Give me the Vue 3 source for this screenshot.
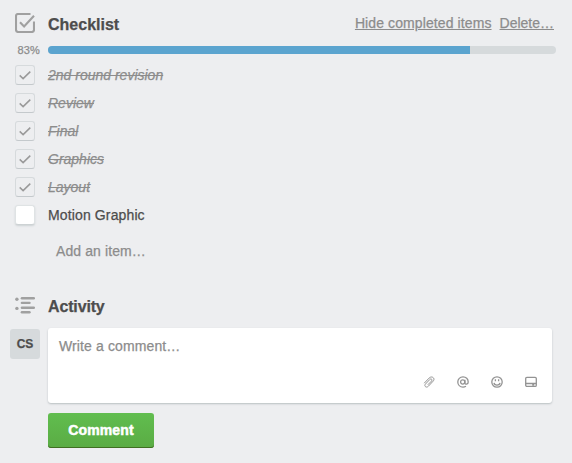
<template>
  <div class="card-detail">
    <section class="checklist">
      <header class="section-header">
        <svg class="section-icon" width="20" height="20" viewBox="0 0 20 20">
          <path d="M15.5 1H3.2Q1 1 1 3.2v13.6Q1 19 3.2 19h13.6q2.2 0 2.2-2.2V8.5" />
          <path d="M5 9.2l4.1 4.2L19 2.8" />
        </svg>
        <h3>Checklist</h3>
        <div class="header-links">
          <a class="hide-link" href="#">Hide completed items</a>
          <a class="delete-link" href="#">Delete…</a>
        </div>
      </header>

      <div class="progress">
        <span class="progress-percent">{{ percent }}%</span>
        <div class="progress-bar">
          <div class="progress-fill" :style="{ width: percent + '%' }"></div>
        </div>
      </div>

      <ul class="items">
        <li v-for="item in items" :key="item.name" class="item" :class="{ done: item.done }" @click="item.done = !item.done">
          <span class="checkbox">
            <svg v-if="item.done" width="12" height="9" viewBox="0 0 12 9">
              <path d="M.7 4.4l3.4 3.2L11.3.6" />
            </svg>
          </span>
          <span class="item-name">{{ item.name }}</span>
        </li>
      </ul>
      <div class="add-item">Add an item…</div>
    </section>

    <section class="activity">
      <header class="section-header">
        <svg class="list-icon" width="20" height="17" viewBox="0 0 20 17">
          <circle cx="1.9" cy="2.2" r="1.7" />
          <circle cx="1.9" cy="11.4" r="1.7" />
          <rect x="5.7" y="0" width="14.3" height="2.6" rx="1.3" />
          <rect x="5.7" y="4.7" width="10" height="2.3" rx="1.1" />
          <rect x="5.7" y="9.4" width="14.3" height="2.5" rx="1.2" />
          <rect x="5.7" y="14" width="10" height="2.4" rx="1.2" />
        </svg>
        <h3 class="activity-title">Activity</h3>
      </header>

      <div class="new-comment">
        <div class="avatar">CS</div>
        <div class="comment-form">
          <div class="comment-box">
            <div class="placeholder">Write a comment…</div>
            <div class="tools">
              <svg width="12" height="12" viewBox="0 0 12 12">
                <path d="M1.2 7.2l4.9-5.1c2.7-2.8 6.6.2 4 3.1l-4.7 5c-2 2.1-4.8-.1-2.9-2.2l4.3-4.5c1.3-1.3 3 .1 1.8 1.5L4.8 8.8" class="thin" />
              </svg>
              <svg width="12" height="12" viewBox="0 0 12 12">
                <circle cx="5.7" cy="6" r="2.1" />
                <path d="M7.9 3.7v3.4c0 1.6 3.3 1.5 3.3-1.2C11.2 2.8 9 .9 6 .9S.8 3.1.8 6s2.2 5.1 5.2 5.1c1.2 0 2.1-.3 3-.8" />
              </svg>
              <svg width="12" height="12" viewBox="0 0 12 12">
                <circle cx="6" cy="6" r="5.2" />
                <path d="M4.4 3.3v2M7.6 3.3v2M3 6.8c.5 3 5.5 3 6 0" />
              </svg>
              <svg width="12" height="12" viewBox="0 0 12 12">
                <rect x=".7" y="1.4" width="10.6" height="9" rx="1.2" />
                <path d="M.7 7.5h10.6M7.2 9h2" />
              </svg>
            </div>
          </div>
          <button class="comment-button">Comment</button>
        </div>
      </div>
    </section>
  </div>
</template>

<script setup>
import { ref, computed } from "vue";

const items = ref([
  { name: "2nd round revision", done: true },
  { name: "Review", done: true },
  { name: "Final", done: true },
  { name: "Graphics", done: true },
  { name: "Layout", done: true },
  { name: "Motion Graphic", done: false },
]);

const percent = computed(() => {
  const done = items.value.filter((item) => item.done).length;
  return Math.round((done / items.value.length) * 100);
});
</script>

<style>
body {
  margin: 0;
  background: #edeef0;
}
</style>

<style scoped>
.card-detail {
  box-sizing: border-box;
  width: 572px;
  height: 463px;
  padding: 11px 16px 0 10px;
  overflow: hidden;
  background: #edeef0;
  color: #4d4d4d;
  font: 14px/18px "Liberation Sans", Arial, sans-serif;
  -webkit-text-stroke: 0.25px;
}

.section-header {
  display: flex;
  align-items: center;
  height: 26px;
}

h3 {
  margin: 1px 0 0 13px;
  font-size: 16px;
  line-height: 20px;
}

.activity-title {
  margin-top: 2px;
  letter-spacing: -0.15px;
}

.section-icon {
  margin: -2px 0 0 5px;
  fill: none;
  stroke: #a0a0a0;
  stroke-width: 2.1;
}

.list-icon {
  margin: -1px 0 0 5px;
  fill: #a0a0a0;
}

.header-links {
  display: flex;
  gap: 8px;
  margin: -2px 2px 0 auto;
}

.header-links a {
  color: #8c8c8c;
  text-underline-offset: 1px;
}

.hide-link {
  letter-spacing: 0.1px;
}

.progress {
  display: flex;
  align-items: center;
  height: 8px;
  margin-top: 9px;
}

.progress-percent {
  width: 30px;
  margin-right: 8px;
  color: #8c8c8c;
  font-size: 11px;
  letter-spacing: 0.2px;
  text-align: right;
}

.progress-bar {
  flex: 1;
  height: 8px;
  overflow: hidden;
  border-radius: 4px;
  background: #d6dadc;
}

.progress-fill {
  height: 100%;
  background: #5ba4cf;
}

.items {
  margin: 7px 0 0;
  padding: 0;
  list-style: none;
}

.item {
  display: flex;
  align-items: center;
  height: 28px;
  padding-left: 5px;
}

.checkbox {
  display: flex;
  align-items: center;
  justify-content: center;
  box-sizing: border-box;
  width: 20px;
  height: 20px;
  margin-right: 13px;
  border: 1px solid #dfe3e4;
  border-bottom-color: #cdd2d4;
  border-radius: 3px;
  background: #fff;
  box-shadow: 0 1px 2px #cdd2d4;
}

.checkbox svg {
  fill: none;
  stroke: #999;
  stroke-width: 1.5;
}

.done .checkbox {
  border-color: #d6dadc;
  border-bottom-color: #c4c9cc;
  background: transparent;
  box-shadow: none;
}

.item-name {
  letter-spacing: 0.13px;
}

.done .item-name {
  color: #8c8c8c;
  font-style: italic;
  letter-spacing: 0;
  text-decoration: line-through;
}

.add-item {
  margin: 13px 0 0 46px;
  color: #8c8c8c;
  letter-spacing: 0.1px;
}

.activity {
  margin-top: 33px;
}

.new-comment {
  display: flex;
  align-items: flex-start;
  margin-top: 9px;
}

.avatar {
  width: 30px;
  height: 30px;
  margin: 1px 8px 0 0;
  border-radius: 3px;
  background: #d6dadc;
  font-size: 12px;
  font-weight: bold;
  line-height: 30px;
  text-align: center;
}

.comment-form {
  width: 504px;
}

.comment-box {
  box-sizing: border-box;
  display: flex;
  flex-direction: column;
  justify-content: space-between;
  height: 75px;
  padding: 9px 15px 15px 11px;
  border-radius: 3px;
  background: #fff;
  box-shadow: 0 1px 2px #b9bfc1;
}

.placeholder {
  color: #8c8c8c;
  letter-spacing: 0.12px;
}

.tools {
  display: flex;
  justify-content: flex-end;
  gap: 22px;
}

.tools svg {
  fill: none;
  stroke: #939393;
  stroke-width: 1.3;
}

.tools .thin {
  stroke-width: 1;
}

.comment-button {
  display: block;
  width: 106px;
  height: 35px;
  margin-top: 10px;
  padding: 0;
  border: 0;
  border-radius: 3px;
  background: linear-gradient(#61bd4f, #5aac44);
  box-shadow: inset 0 -1px 0 #3f6f21;
  color: #fff;
  font: bold 14px/33px "Liberation Sans", Arial, sans-serif;
  letter-spacing: 0.15px;
  -webkit-text-stroke: 0.5px;
}
</style>
